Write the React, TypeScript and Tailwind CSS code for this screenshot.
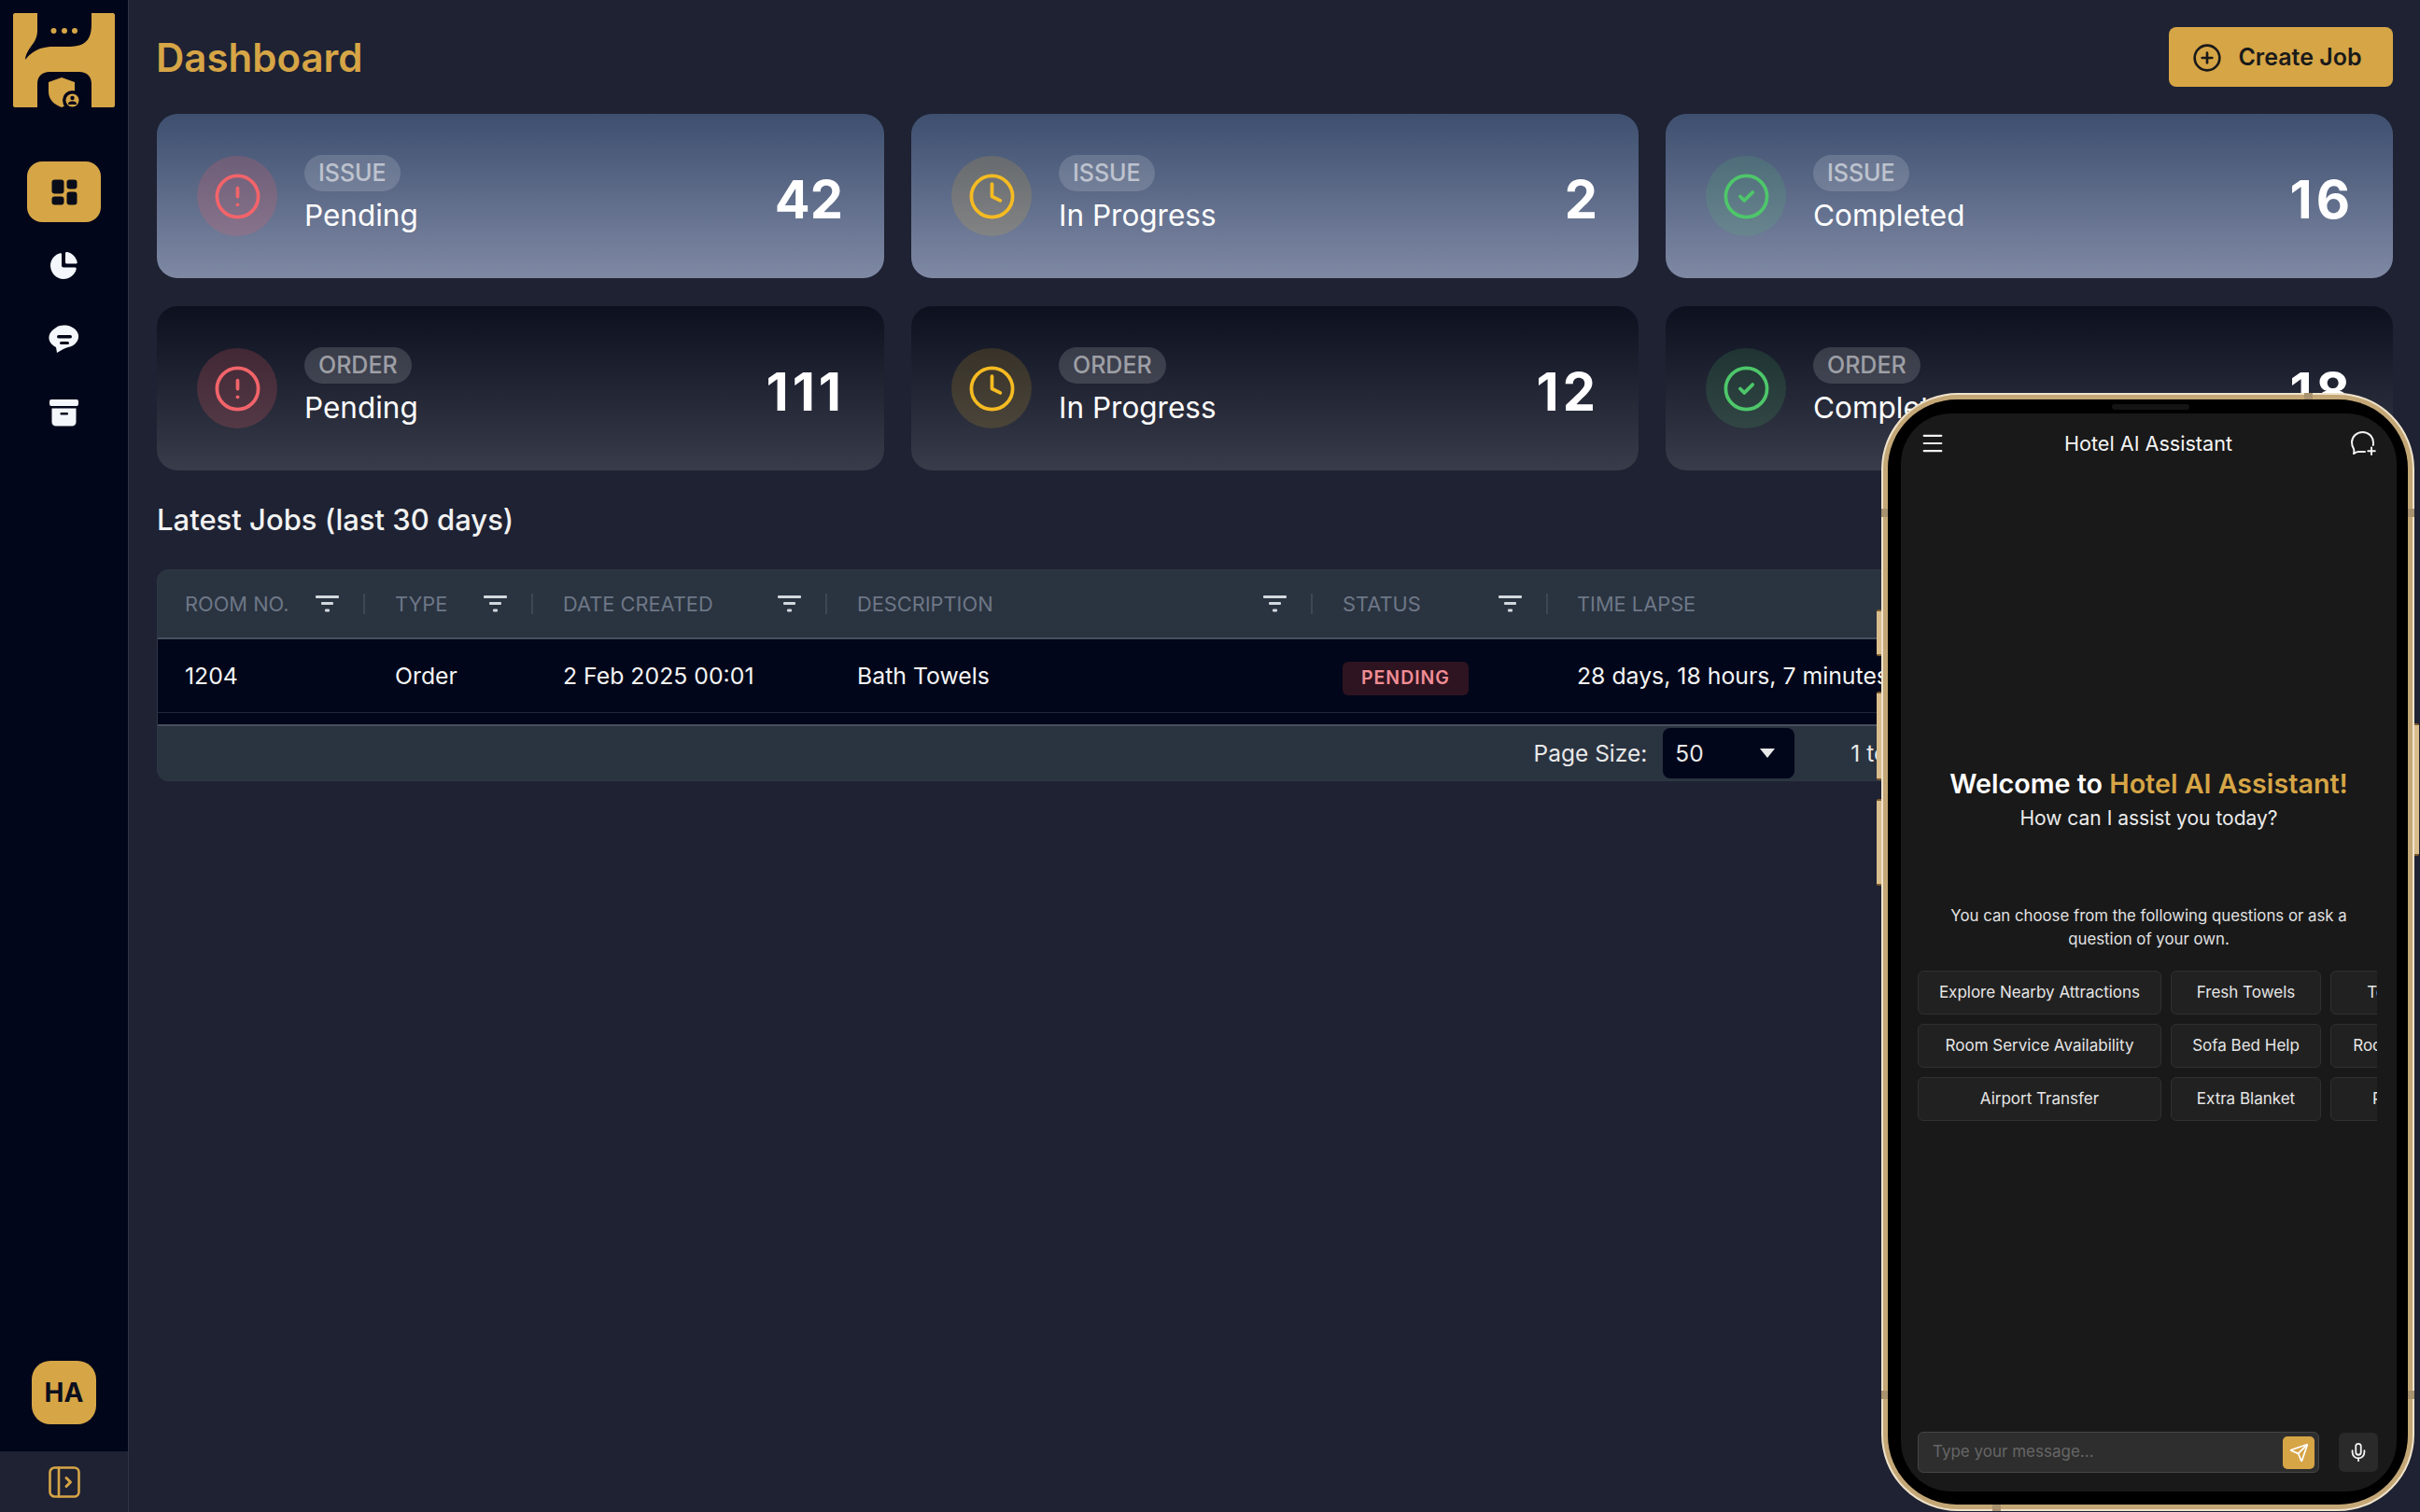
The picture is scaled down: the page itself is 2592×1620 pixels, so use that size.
import { CircleAlert, CircleCheck, CirclePlus, Clock, Menu, Mic, Send } from 'lucide-react';

const stats = [
  { tag: 'ISSUE', label: 'Pending', value: '42', kind: 'alert' },
  { tag: 'ISSUE', label: 'In Progress', value: '2', kind: 'clock' },
  { tag: 'ISSUE', label: 'Completed', value: '16', kind: 'check' },
  { tag: 'ORDER', label: 'Pending', value: '111', kind: 'alert' },
  { tag: 'ORDER', label: 'In Progress', value: '12', kind: 'clock' },
  { tag: 'ORDER', label: 'Completed', value: '18', kind: 'check' },
];

const columns = ['ROOM NO.', 'TYPE', 'DATE CREATED', 'DESCRIPTION', 'STATUS'];

const chips = [
  'Explore Nearby Attractions',
  'Fresh Towels',
  'Toothbrush',
  'Room Service Availability',
  'Sofa Bed Help',
  'Room Cleaning',
  'Airport Transfer',
  'Extra Blanket',
  'Pool Time',
];

function Logo() {
  return (
    <svg width="137" height="130" viewBox="0 0 137 130" className="shrink-0">
      <path
        fill="#d6a546"
        d="M16 14H40V33C40 42 35 47 31 53C29 56 27 60 27 64C33 57 40 50 58 50H72C88 50 98 46 98 26V14H121C122 14 123 15 123 16V113C123 114 122 115 121 115H98V90C98 82 93 77 85 77H53C45 77 40 82 40 90V115H16C15 115 14 114 14 113V16C14 15 15 14 16 14Z"
      />
      <circle cx="57.5" cy="33" r="3" fill="#d6a546" />
      <circle cx="69" cy="33" r="3" fill="#d6a546" />
      <circle cx="80" cy="33" r="3" fill="#d6a546" />
      <path fill="#d6a546" d="M66 83L80 88V100C80 107 73 112 66 115C58 112 52 107 52 98V88Z" />
      <circle cx="77.5" cy="107.5" r="10.5" fill="#01061a" />
      <circle cx="77.5" cy="107.5" r="7" fill="#d6a546" />
      <circle cx="77.5" cy="105" r="2.2" fill="#01061a" />
      <path fill="#01061a" d="M73 112C73 109 75 108.500 77.500 108.500C80 108.500 82 109 82 112Z" />
    </svg>
  );
}

function DashIcon() {
  return (
    <svg width="28" height="28" viewBox="0 0 28 28" fill="#090d1a">
      <rect x="0.500" y="0.500" width="13" height="15" rx="3" />
      <rect x="16.500" y="0.500" width="11" height="10" rx="3" />
      <rect x="0.500" y="18.500" width="13" height="9" rx="3" />
      <rect x="16.500" y="13.500" width="11" height="14" rx="3" />
    </svg>
  );
}

function PieIcon() {
  return (
    <svg width="31" height="31" viewBox="0 0 31 31" fill="#f3f6fb">
      <path d="M13 3.500C13 2.500 12.300 2 11.500 2.200C5.500 3.700 1 9 1 15.500C1 23.200 7.300 30 15 30C21.500 30 27 25.500 28.700 19.500C29 18.500 28.400 17.500 27.400 17.500H15C13.900 17.500 13 16.600 13 15.500Z" />
      <path d="M17 2.500C17 1.500 17.800 0.700 18.800 1C24.300 2 28.500 6.500 29.700 11.700C30 12.800 29.200 13.500 28.200 13.500H18.500C17.700 13.500 17 12.800 17 12Z" />
    </svg>
  );
}

function ChatIcon() {
  return (
    <svg width="33" height="31" viewBox="0 0 33 31">
      <path
        fill="#f3f6fb"
        d="M8 3C12 0 19 0 24 2C29 4 33 9 32 14C31 19 27 23 21 24C17 25 14 27 9 30C8.500 28 8.500 26 8 24C4 22 1 19 0.500 15C0 10 3 6 8 3Z"
      />
      <rect x="9" y="11" width="16" height="3.500" rx="1.700" fill="#01061a" />
      <rect x="12" y="18" width="10" height="3" rx="1.500" fill="#01061a" />
    </svg>
  );
}

function BoxIcon() {
  return (
    <svg width="31" height="29" viewBox="0 0 31 29" fill="#f3f6fb">
      <rect x="0" y="0" width="31" height="7" rx="2" />
      <path d="M2.500 9.500H28.500V24C28.500 26.800 26.800 28.500 24 28.500H7C4.200 28.500 2.500 26.800 2.500 24Z" />
      <rect x="11.500" y="14" width="8.500" height="2.500" rx="1.200" fill="#01061a" />
    </svg>
  );
}

function PanelIcon() {
  return (
    <svg width="34" height="34" viewBox="0 0 34 34" fill="none" stroke="#d6a546" strokeWidth="2.600" strokeLinecap="round" strokeLinejoin="round">
      <rect x="1.500" y="1.500" width="31" height="31" rx="5" />
      <path d="M11 1.500V32.500" />
      <path d="M19 12.500L23.500 17L19 21.500" strokeWidth="3" />
    </svg>
  );
}

function FilterIcon() {
  return (
    <svg width="25" height="19" viewBox="0 0 25 19" fill="#d3d8de" className="shrink-0">
      <rect x="0" y="0" width="25" height="3" rx="1" />
      <rect x="6" y="7" width="13" height="3" rx="1" />
      <rect x="10" y="14.500" width="5" height="3" rx="1" />
    </svg>
  );
}

function NewChatIcon() {
  return (
    <svg width="28" height="26" viewBox="0 0 28 26" fill="none" stroke="#f2f2f2" strokeWidth="2" strokeLinecap="round" strokeLinejoin="round">
      <path d="M15 22H8C6 22 4 23.500 3 24C3.500 22 3.500 20.500 3 19C1.500 16.500 1 14.500 1 12C1 6 6 1 12.500 1C19 1 24 6 24 12C24 13 24 14 23.800 15" />
      <path d="M22 17.500V25M18.300 21.200H25.800" />
    </svg>
  );
}

function StatCard({ tag, label, value, kind }: { tag: string; label: string; value: string; kind: string }) {
  const issue = tag === 'ISSUE';
  return (
    <div
      className={`flex h-[176px] items-center rounded-[22px] pl-[43px] pr-[44px] ${
        issue ? 'bg-gradient-to-b from-[#3e4f6f] to-[#7f89a4]' : 'bg-gradient-to-b from-[#0c101f] to-[#393c4a]'
      }`}
    >
      {kind === 'alert' && (
        <div className="flex h-[86px] w-[86px] shrink-0 items-center justify-center rounded-full bg-[#ef5f64]/20">
          <CircleAlert size={53} strokeWidth={1.7} color="#f2646a" />
        </div>
      )}
      {kind === 'clock' && (
        <div className="flex h-[86px] w-[86px] shrink-0 items-center justify-center rounded-full bg-[#f5b921]/15">
          <Clock size={53} strokeWidth={1.7} color="#f6bb22" />
        </div>
      )}
      {kind === 'check' && (
        <div className="flex h-[86px] w-[86px] shrink-0 items-center justify-center rounded-full bg-[#4ec76a]/15">
          <CircleCheck size={53} strokeWidth={1.7} color="#4ec76a" />
        </div>
      )}
      <div className="ml-[29px] flex flex-col items-start">
        <span
          className={`flex h-[39px] items-center rounded-full px-[15px] text-[25px] font-medium ${
            issue ? 'bg-white/15 text-white/55' : 'bg-white/15 text-white/50'
          }`}
        >
          {tag}
        </span>
        <span className="mt-[3px] text-[31.500px] leading-[46px] text-white">{label}</span>
      </div>
      <span
        className={`ml-auto pt-[8px] text-[56px] font-bold leading-none text-white ${
          value.includes('1') ? '-mr-[2px] tracking-[4px]' : ''
        }`}
      >
        {value}
      </span>
    </div>
  );
}

function Phone() {
  return (
    <div className="absolute left-[2015px] top-[421px] h-[1198px] w-[571px] rounded-[82px] border-2 border-[#efe3cc] bg-[#c4a776] p-[5px]">
      <div className="absolute left-[-7px] top-[230px] h-[50px] w-[5px] rounded-l-[2px] border-y-2 border-[#7a5a2c] bg-[#d9bd8c]" />
      <div className="absolute left-[-7px] top-[318px] h-[95px] w-[5px] rounded-l-[2px] border-y-2 border-[#7a5a2c] bg-[#d9bd8c]" />
      <div className="absolute left-[-7px] top-[433px] h-[93px] w-[5px] rounded-l-[2px] border-y-2 border-[#7a5a2c] bg-[#d9bd8c]" />
      <div className="absolute right-[-7px] top-[352px] h-[142px] w-[5px] rounded-r-[2px] border-y-2 border-[#7a5a2c] bg-[#d9bd8c]" />
      <div className="absolute left-[451px] top-[-2px] h-[7px] w-[9px] bg-[#a8926f]" />
      <div className="absolute bottom-[-2px] left-[117px] h-[7px] w-[9px] bg-[#a8926f]" />
      <div className="absolute left-[-2px] top-[122px] h-[9px] w-[7px] bg-[#a8926f]" />
      <div className="absolute right-[-2px] top-[122px] h-[9px] w-[7px] bg-[#a8926f]" />
      <div className="absolute bottom-[118px] left-[-2px] h-[9px] w-[7px] bg-[#a8926f]" />
      <div className="absolute bottom-[118px] right-[-2px] h-[9px] w-[7px] bg-[#a8926f]" />
      <div className="flex h-full w-full flex-col rounded-[74px] bg-black pb-[14px] pl-[14px] pr-[12px] pt-[15px]">
        <div className="absolute left-[245px] top-[10px] h-[6px] w-[83px] rounded-full bg-[#141414]" />
        <div className="flex h-full flex-col rounded-[54px] bg-[#191919] text-white">
          <div className="flex h-[64px] shrink-0 items-center justify-between pl-[20px] pr-[21px]">
            <Menu size={28} strokeWidth={1.8} color="#f2f2f2" />
            <span className="text-[21.600px] text-[#f4f4f4]">Hotel AI Assistant</span>
            <NewChatIcon />
          </div>
          <h2 className="mt-[315px] text-center text-[28.700px] font-semibold leading-[36px]">
            Welcome to <span className="text-[#d6a546]">Hotel AI Assistant!</span>
          </h2>
          <p className="mt-[4px] text-center text-[21px] leading-[30px] text-[#ececec]">How can I assist you today?</p>
          <p className="mx-auto mt-[77px] w-[440px] text-center text-[16.800px] leading-[25px] text-[#e2e2e2]">
            You can choose from the following questions or ask a question of your own.
          </p>
          <div className="ml-[18px] mt-[21px] w-[492px] overflow-hidden">
            <div className="grid w-[612px] grid-cols-[261px_161px_170px] gap-x-[10px] gap-y-[10px]">
              {chips.map((chip) => (
                <div
                  key={chip}
                  className="flex h-[47px] items-center justify-center rounded-[6px] border border-[#303030] bg-[#212121] text-[17px] text-[#e6e6e6]"
                >
                  {chip}
                </div>
              ))}
            </div>
          </div>
          <div className="mt-auto flex items-center gap-[21px] pb-[20px] pl-[18px]">
            <div className="flex h-[44px] w-[430px] items-center justify-between rounded-[6px] border border-[#454545] bg-[#2e2e2e] pl-[15px] pr-[4px]">
              <span className="text-[17px] text-[#666666]">Type your message...</span>
              <div className="flex h-[35px] w-[34px] items-center justify-center rounded-[5px] bg-[#d6a546]">
                <Send size={21} strokeWidth={2} color="#ffffff" />
              </div>
            </div>
            <div className="flex h-[42px] w-[42px] items-center justify-center rounded-[6px] bg-[#2a2a2a]">
              <Mic size={22} strokeWidth={2} color="#f2f2f2" />
            </div>
          </div>
        </div>
      </div>
    </div>
  );
}

export default function App() {
  return (
    <div className="relative flex h-[1620px] w-[2592px] overflow-hidden bg-[#1e2233] [font-family:Inter,sans-serif]">
      <aside className="flex h-full w-[138px] shrink-0 flex-col border-r border-[#2f3447]">
        <div className="flex flex-1 flex-col items-center bg-[#01061a]">
          <Logo />
          <div className="mt-[43px] flex flex-col items-center gap-[14px]">
            <div className="flex h-[65px] w-[79px] items-center justify-center rounded-[16px] bg-[#d6a546]">
              <DashIcon />
            </div>
            <div className="flex h-[65px] w-[79px] items-center justify-center">
              <PieIcon />
            </div>
            <div className="flex h-[65px] w-[79px] items-center justify-center">
              <ChatIcon />
            </div>
            <div className="flex h-[65px] w-[79px] items-center justify-center">
              <BoxIcon />
            </div>
          </div>
          <div className="mb-[29px] mt-auto flex h-[68px] w-[69px] items-center justify-center rounded-[20px] bg-[#d6a546] text-[28px] font-bold text-[#0b0f1e]">
            HA
          </div>
        </div>
        <div className="flex h-[65px] items-center justify-center">
          <PanelIcon />
        </div>
      </aside>

      <main className="flex min-w-0 flex-1 flex-col pl-[30px] pr-[29px] pt-[29px]">
        <header className="flex h-[64px] items-center justify-between">
          <h1 className="-ml-[1px] pt-[2px] text-[42px] font-semibold leading-none text-[#d6a546]">Dashboard</h1>
          <button className="flex h-[64px] w-[240px] items-center justify-center gap-[17px] rounded-[8px] bg-[#d6a546] pr-[8px] pt-[1px] text-[25px] font-semibold text-[#1a1a1a]">
            <CirclePlus size={32} strokeWidth={2} />
            Create Job
          </button>
        </header>

        <div className="mt-[29px] grid grid-cols-3 gap-x-[29px] gap-y-[30px]">
          {stats.map((s) => (
            <StatCard key={s.tag + s.label} {...s} />
          ))}
        </div>

        <h2 className="mt-[33px] text-[31px] font-medium leading-[40px] text-[#f2f2f2]">Latest Jobs (last 30 days)</h2>

        <div className="mt-[33px] overflow-hidden rounded-[12px] border border-[#2f3744] bg-[#2a3340]">
          <div className="grid h-[74px] grid-cols-[222px_180px_315px_520px_252px_1fr] items-center border-b-2 border-[#47505e] text-[21.800px] text-[#6d7786]">
            {columns.map((col, i) => (
              <div key={col} className={`flex h-[22px] items-center ${i === 0 ? 'pl-[29px]' : 'pl-[32px]'}`}>
                <span className="flex-1">{col}</span>
                <FilterIcon />
                <div className="ml-[26px] h-[22px] w-[2px] bg-[#3d4653]" />
              </div>
            ))}
            <div className="pl-[31px]">TIME LAPSE</div>
          </div>
          <div className="bg-[#01061a] pb-[12px]">
            <div className="grid h-[79px] grid-cols-[222px_180px_315px_520px_252px_1fr] items-center border-b border-[#222736] pt-[2px] text-[24.800px] text-[#f4f4f4]">
              <div className="pl-[29px]">1204</div>
              <div className="pl-[32px]">Order</div>
              <div className="pl-[32px]">2 Feb 2025 00:01</div>
              <div className="pl-[32px]">Bath Towels</div>
              <div className="pl-[32px]">
                <span className="mt-[3px] flex h-[36px] w-[135px] items-center justify-center rounded-[6px] bg-[#2e1420] text-[19.500px] font-semibold tracking-[0.05em] text-[#f08d95]">
                  PENDING
                </span>
              </div>
              <div className="pl-[31px]">28 days, 18 hours, 7 minutes</div>
            </div>
          </div>
          <div className="flex h-[60px] items-center justify-end border-t-2 border-[#47505e] text-[24.500px] text-[#e8e8e8]">
            <span>Page Size:</span>
            <div className="ml-[17px] flex h-[54px] w-[141px] items-center justify-between rounded-[8px] bg-[#01061a] pl-[13px] pr-[21px]">
              <span>50</span>
              <span className="h-0 w-0 border-x-[8px] border-t-[10px] border-x-transparent border-t-[#e8e8e8]" />
            </div>
            <span className="ml-[60px]">1 to 1 of 1</span>
            <span className="ml-[60px] w-[416px]">Page 1 of 1</span>
          </div>
        </div>
      </main>

      <Phone />
    </div>
  );
}
